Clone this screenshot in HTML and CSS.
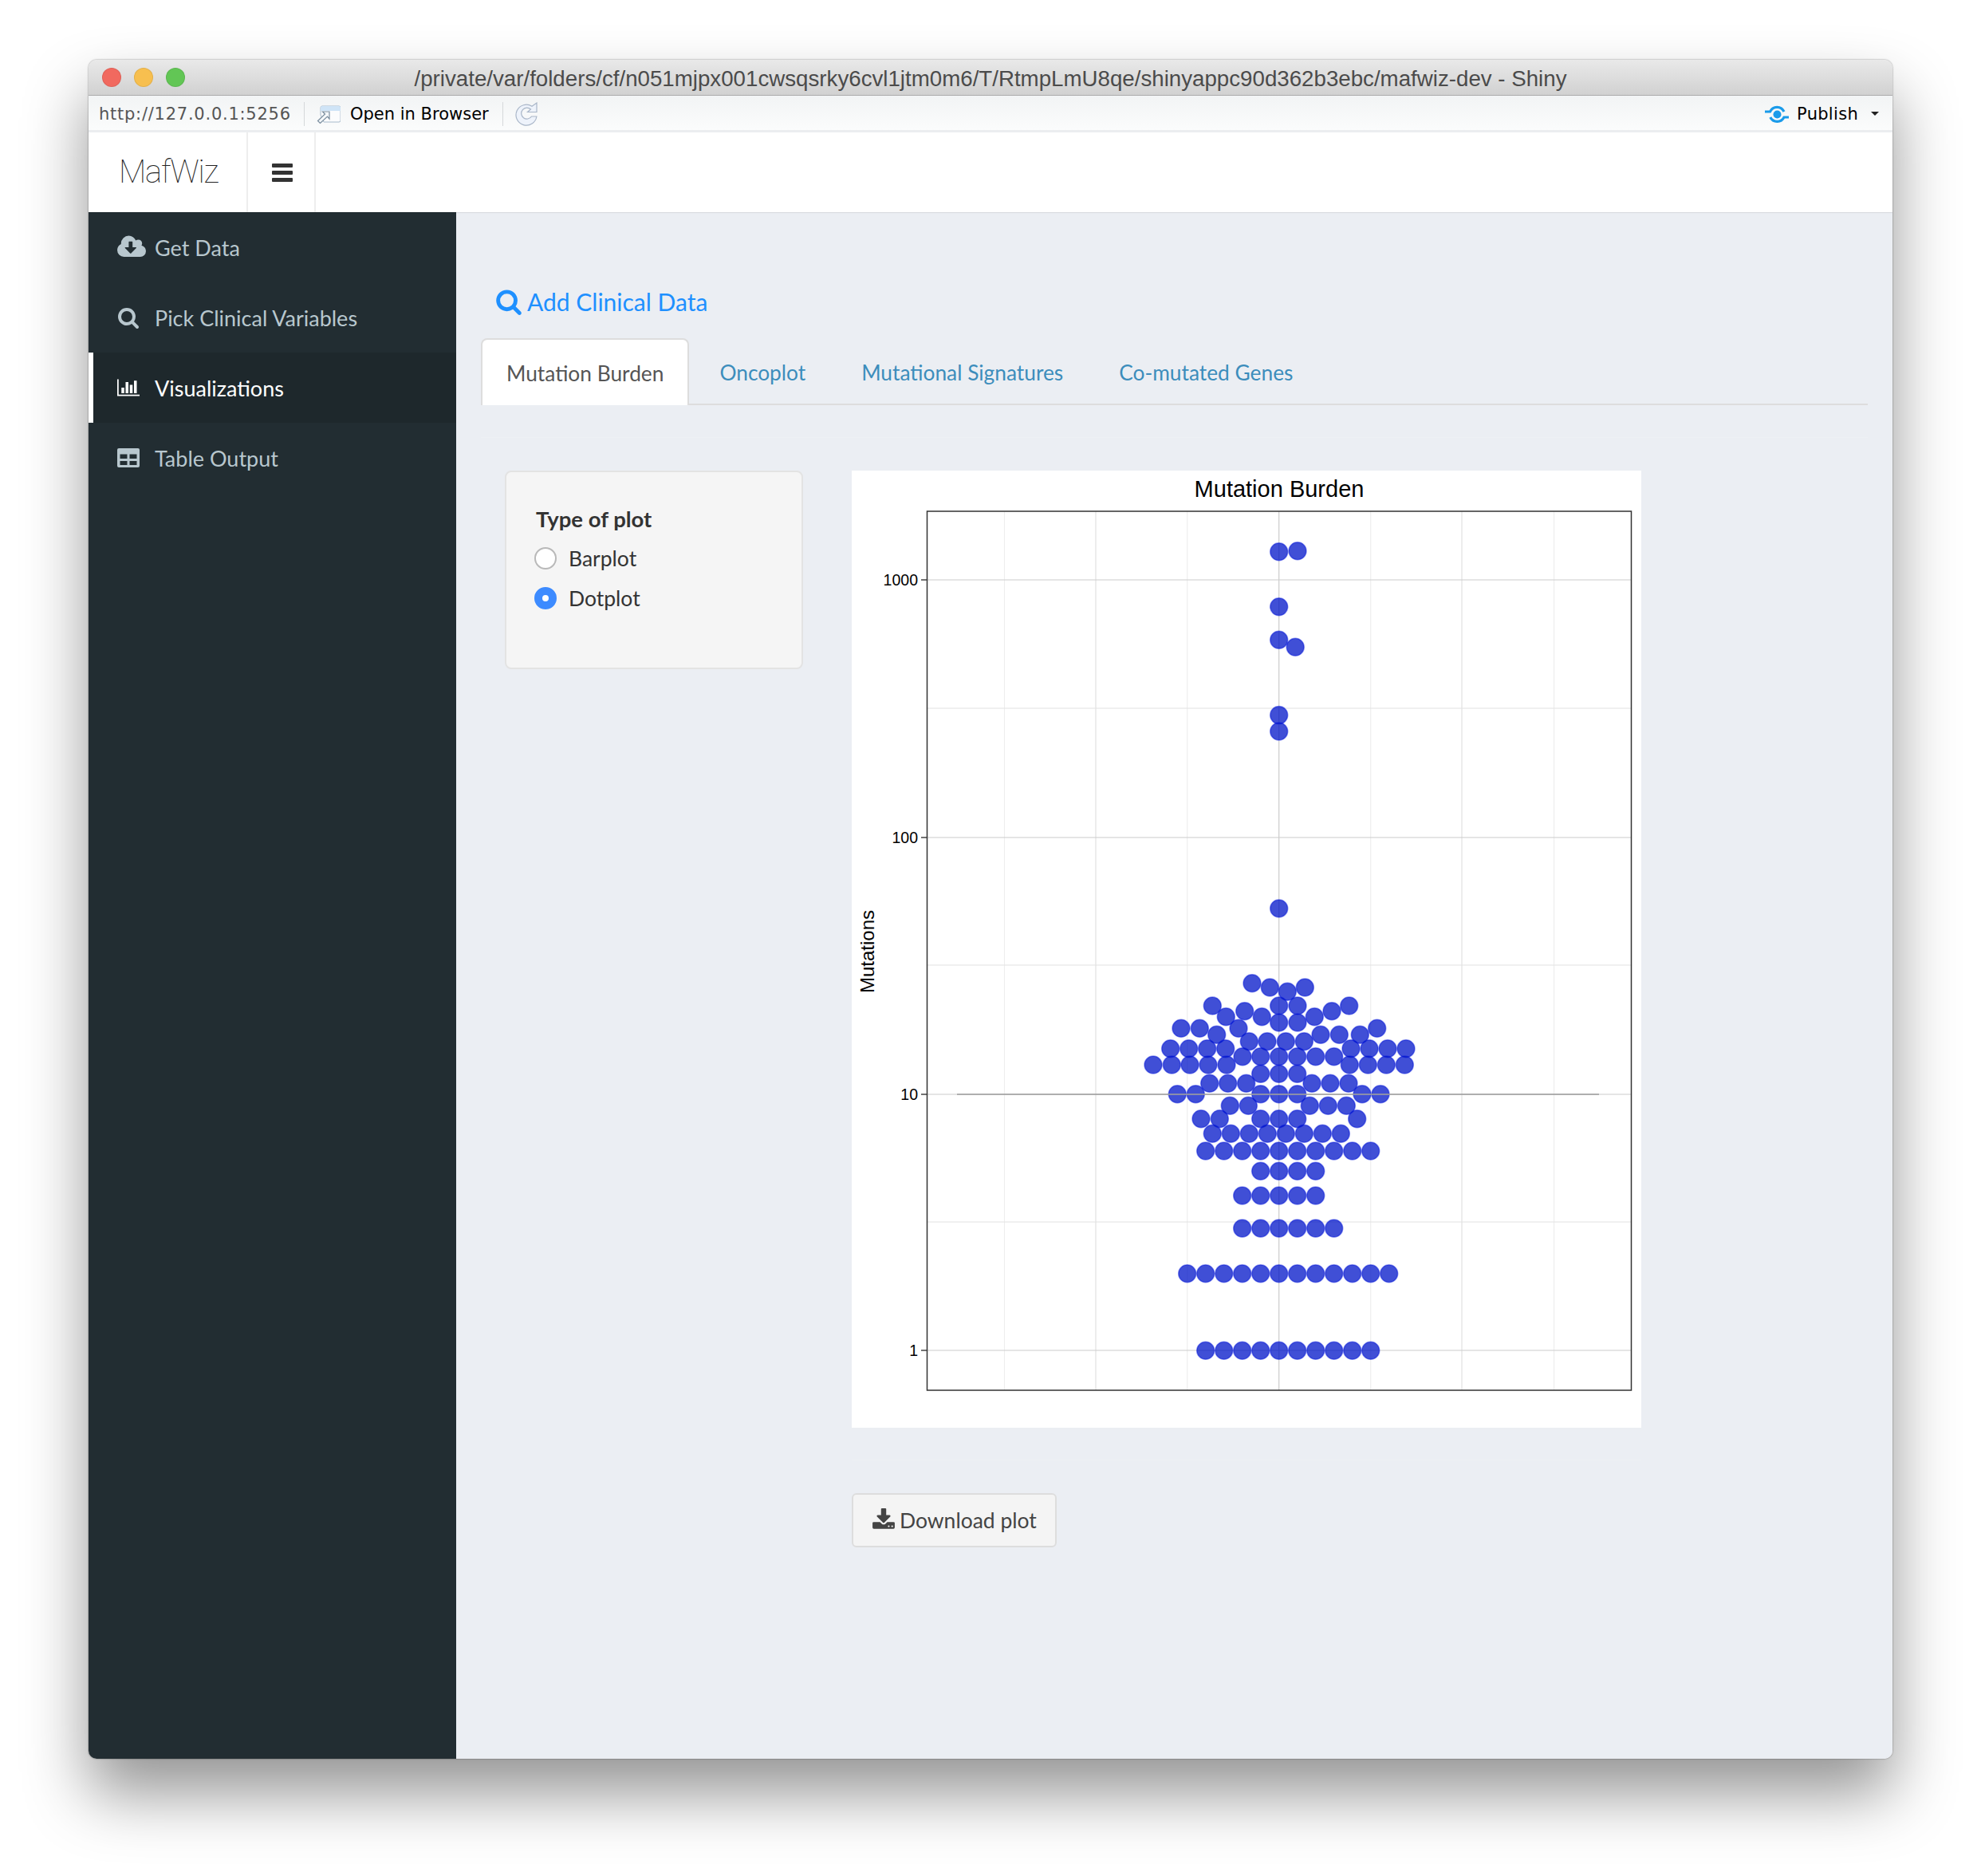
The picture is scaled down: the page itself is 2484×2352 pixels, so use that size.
FILE: index.html
```html
<!DOCTYPE html>
<html lang="en">
<head>
  <meta charset="UTF-8" />
  <title>MafWiz</title>
  <link rel="stylesheet" href="styles.css">
</head>
<body>
  <div class="window">
    <div class="titlebar">
      <span class="light red"></span>
      <span class="light amber"></span>
      <span class="light green"></span>
      <div class="title">/private/var/folders/cf/n051mjpx001cwsqsrky6cvl1jtm0m6/T/RtmpLmU8qe/shinyappc90d362b3ebc/mafwiz-dev - Shiny</div>
    </div>

    <div class="toolbar">
      <span class="url">http://127.0.0.1:5256</span>
      <span class="tool-sep"></span>
      <svg class="open-icon" viewBox="0 0 30 26">
        <path d="M5 14V5a2 2 0 0 1 2-2h21a2 2 0 0 1 2 2v16a2 2 0 0 1-2 2H9z" fill="#fbfcfd" stroke="#a8bacb"/>
        <path d="M5 9V5a2 2 0 0 1 2-2h21a2 2 0 0 1 2 2v4z" fill="#cfe4f7"/>
        <path d="M16 10H7.500l3 3-9 8.500 3 3 9-8.500 2.500 3z" fill="#f4f7f9" stroke="#7a8d9e" stroke-width="1.200"/>
      </svg>
      <span class="open-label">Open in Browser</span>
      <span class="tool-sep"></span>
      <svg class="reload-icon" viewBox="0 0 28 30">
        <path d="M21 5.200 27 1v11.500H15.500l4-3.500A7 7 0 1 0 20.500 18h6.400A13 13 0 1 1 21 5.200z" fill="#eef3fb" stroke="#a9b6c8" stroke-width="1.200"/>
      </svg>
      <div class="publish">
        <svg class="publish-icon" viewBox="0 0 32 24">
          <circle cx="16.500" cy="12.500" r="5" fill="#1a9bea"/>
          <path d="M1 9h6.500A9.600 9.600 0 0 1 25 9M7.800 16A9.600 9.600 0 0 0 25 16h6" fill="none" stroke="#1a9bea" stroke-width="3.200"/>
        </svg>
        <span class="publish-label">Publish</span>
        <span class="caret"></span>
      </div>
    </div>

    <nav class="navbar">
      <div class="logo">MafWiz</div>
      <div class="burger"><span></span><span></span><span></span></div>
    </nav>

    <div class="shell">
      <aside class="sidebar">
        <a class="side-item">
          <span class="side-icon">
            <svg class="icon-cloud" viewBox="0 0 1920 1792"><path d="M1280 928q0-14-9-23t-23-9h-224v-352q0-13-9.500-22.500t-22.500-9.500h-192q-13 0-22.500 9.500t-9.500 22.500v352h-224q-13 0-22.500 9.500t-9.500 22.500q0 14 9 23l352 352q9 9 23 9t23-9l351-351q10-12 10-24zm640 224q0 159-112.500 271.500t-271.500 112.500h-1088q-185 0-316.500-131.500t-131.500-316.500q0-130 70-240t188-165q-2-30-2-43 0-212 150-362t362-150q156 0 285.500 87t188.500 231q71-62 166-62 106 0 181 75t75 181q0 76-41 138 130 31 213.500 135.500t83.500 238.500z"/></svg>
          </span>
          Get Data
        </a>
        <a class="side-item">
          <span class="side-icon">
            <svg class="icon-small" viewBox="0 0 1792 1792"><path d="M1216 832q0-185-131.500-316.500t-316.500-131.500-316.500 131.500-131.500 316.500 131.500 316.500 316.500 131.500 316.500-131.500 131.500-316.500zm512 832q0 52-38 90t-90 38q-54 0-90-38l-343-342q-179 124-399 124-143 0-273.500-55.500t-225-150-150-225-55.500-273.500 55.500-273.500 150-225 225-150 273.500-55.500 273.500 55.500 225 150 150 225 55.500 273.500q0 220-124 399l343 343q37 37 37 90z"/></svg>
          </span>
          Pick Clinical Variables
        </a>
        <a class="side-item active">
          <span class="side-icon">
            <svg class="icon-small" viewBox="0 0 2048 1792"><path d="M640 896v512h-256v-512h256zm384-512v1024h-256v-1024h256zm1024 1152v128h-2048v-1536h128v1408h1920zm-640-896v768h-256v-768h256zm384-384v1152h-256v-1152h256z"/></svg>
          </span>
          Visualizations
        </a>
        <a class="side-item">
          <span class="side-icon">
            <svg class="icon-small" viewBox="0 0 28 24"><path fill-rule="evenodd" d="M2 0h24a2 2 0 0 1 2 2v20a2 2 0 0 1-2 2H2a2 2 0 0 1-2-2V2a2 2 0 0 1 2-2zm1.500 7.500v5.500h9V7.500zm12 0v5.500h9V7.500zm-12 8.500v5h9v-5zm12 0v5h9v-5z"/></svg>
          </span>
          Table Output
        </a>
      </aside>

      <main class="content">
        <a class="clinical-link">
          <svg class="clinical-icon" viewBox="0 0 1792 1792"><path d="M1216 832q0-185-131.500-316.500t-316.500-131.500-316.500 131.500-131.500 316.500 131.500 316.500 316.500 131.500 316.500-131.500 131.500-316.500zm512 832q0 52-38 90t-90 38q-54 0-90-38l-343-342q-179 124-399 124-143 0-273.500-55.500t-225-150-150-225-55.500-273.500 55.500-273.500 150-225 225-150 273.500-55.500 273.500 55.500 225 150 150 225 55.500 273.500q0 220-124 399l343 343q37 37 37 90z"/></svg>
          Add Clinical Data
        </a>

        <ul class="tabs">
          <li class="tab active">Mutation Burden</li>
          <li class="tab">Oncoplot</li>
          <li class="tab">Mutational Signatures</li>
          <li class="tab">Co-mutated Genes</li>
        </ul>

        <hr class="faint">

        <div class="tab-body">
          <div class="well">
            <div class="well-label">Type of plot</div>
            <div class="radio"><span class="radio-dot"></span>Barplot</div>
            <div class="radio"><span class="radio-dot on"></span>Dotplot</div>
          </div>

          <div class="plot-col">
            <svg class="plot" viewBox="0 0 990 1200">
              <g class="grid-minor">
                <path d="M191.500 51V1153M420.700 51V1153M650.700 51V1153M880.600 51V1153"/>
              </g>
              <g class="grid-mid">
                <path d="M95 298H977M95 620H977M95 942H977M306 51V1153M765 51V1153"/>
              </g>
              <g class="grid-major">
                <path d="M95 137H977M95 460H977M95 782H977M95 1103H977M535.700 51V1153"/>
              </g>

              <g class="dots">
                <circle cx="535.700" cy="101.700" r="11"/><circle cx="559" cy="100.700" r="11"/>
                <circle cx="535.700" cy="170.700" r="11"/>
                <circle cx="535.700" cy="212.300" r="11"/><circle cx="556.200" cy="221.300" r="11"/>
                <circle cx="535.700" cy="306.600" r="11"/><circle cx="535.700" cy="327" r="11"/>
                <circle cx="535.700" cy="549" r="11"/>

                <circle cx="502" cy="642.700" r="11"/><circle cx="524.300" cy="648" r="11"/><circle cx="546.300" cy="653.300" r="11"/><circle cx="568.300" cy="648" r="11"/>
                <circle cx="535.700" cy="671" r="11"/><circle cx="559" cy="671" r="11"/><circle cx="452.300" cy="671" r="11"/><circle cx="623.700" cy="671" r="11"/>
                <circle cx="469.300" cy="684.700" r="11"/><circle cx="492.700" cy="677.700" r="11"/><circle cx="514.300" cy="684.700" r="11"/><circle cx="535.700" cy="692" r="11"/><circle cx="559" cy="692" r="11"/><circle cx="580.300" cy="684.700" r="11"/><circle cx="602" cy="677.700" r="11"/>
                <circle cx="413" cy="699.300" r="11"/><circle cx="436.300" cy="699.300" r="11"/><circle cx="457.700" cy="707.300" r="11"/><circle cx="485" cy="699.300" r="11"/><circle cx="658.700" cy="699.300" r="11"/><circle cx="588" cy="707.300" r="11"/><circle cx="611.300" cy="707.300" r="11"/><circle cx="637.300" cy="707.300" r="11"/>
                <circle cx="498.300" cy="715.700" r="11"/><circle cx="521" cy="715.700" r="11"/><circle cx="544.300" cy="715.700" r="11"/><circle cx="567.300" cy="715.700" r="11"/>
                <circle cx="399.700" cy="724.700" r="11"/><circle cx="422.700" cy="724.700" r="11"/><circle cx="445.700" cy="724.700" r="11"/><circle cx="468.700" cy="724.700" r="11"/><circle cx="626" cy="724.700" r="11"/><circle cx="649" cy="724.700" r="11"/><circle cx="672" cy="724.700" r="11"/><circle cx="695" cy="724.700" r="11"/>
                <circle cx="490" cy="734.700" r="11"/><circle cx="512.700" cy="734.700" r="11"/><circle cx="535.700" cy="734.700" r="11"/><circle cx="558.700" cy="734.700" r="11"/><circle cx="581.700" cy="734.700" r="11"/><circle cx="604.700" cy="734.700" r="11"/>
                <circle cx="378" cy="745" r="11"/><circle cx="401.300" cy="745" r="11"/><circle cx="424" cy="745" r="11"/><circle cx="447" cy="745" r="11"/><circle cx="470" cy="745" r="11"/><circle cx="624.300" cy="745" r="11"/><circle cx="647.300" cy="745" r="11"/><circle cx="670.300" cy="745" r="11"/><circle cx="693.300" cy="745" r="11"/>
                <circle cx="512.700" cy="756.300" r="11"/><circle cx="535.700" cy="756.300" r="11"/><circle cx="558.700" cy="756.300" r="11"/>
                <circle cx="448.700" cy="768.300" r="11"/><circle cx="471.700" cy="768.300" r="11"/><circle cx="494.700" cy="768.300" r="11"/><circle cx="577" cy="768.300" r="11"/><circle cx="600" cy="768.300" r="11"/><circle cx="623" cy="768.300" r="11"/>
                <circle cx="408.300" cy="781.700" r="11"/><circle cx="431.300" cy="781.700" r="11"/><circle cx="512.700" cy="781.700" r="11"/><circle cx="535.700" cy="781.700" r="11"/><circle cx="558.700" cy="781.700" r="11"/><circle cx="640" cy="781.700" r="11"/><circle cx="663" cy="781.700" r="11"/>
                <circle cx="474.300" cy="796.300" r="11"/><circle cx="497.300" cy="796.300" r="11"/><circle cx="574.300" cy="796.300" r="11"/><circle cx="597.300" cy="796.300" r="11"/><circle cx="620.300" cy="796.300" r="11"/>
                <circle cx="438" cy="812.700" r="11"/><circle cx="461.300" cy="812.700" r="11"/><circle cx="512.700" cy="812.700" r="11"/><circle cx="535.700" cy="812.700" r="11"/><circle cx="558.700" cy="812.700" r="11"/><circle cx="633.700" cy="812.700" r="11"/>
                <circle cx="452.300" cy="831.300" r="11"/><circle cx="475.300" cy="831.300" r="11"/><circle cx="498.300" cy="831.300" r="11"/><circle cx="521.300" cy="831.300" r="11"/><circle cx="544.300" cy="831.300" r="11"/><circle cx="567.300" cy="831.300" r="11"/><circle cx="590.300" cy="831.300" r="11"/><circle cx="613.300" cy="831.300" r="11"/>
                <circle cx="443.700" cy="853" r="11"/><circle cx="466.700" cy="853" r="11"/><circle cx="489.700" cy="853" r="11"/><circle cx="512.700" cy="853" r="11"/><circle cx="535.700" cy="853" r="11"/><circle cx="558.700" cy="853" r="11"/><circle cx="581.700" cy="853" r="11"/><circle cx="604.700" cy="853" r="11"/><circle cx="627.700" cy="853" r="11"/><circle cx="650.700" cy="853" r="11"/>
                <circle cx="512.700" cy="878.300" r="11"/><circle cx="535.700" cy="878.300" r="11"/><circle cx="558.700" cy="878.300" r="11"/><circle cx="581.700" cy="878.300" r="11"/>
                <circle cx="489.700" cy="909" r="11"/><circle cx="512.700" cy="909" r="11"/><circle cx="535.700" cy="909" r="11"/><circle cx="558.700" cy="909" r="11"/><circle cx="581.700" cy="909" r="11"/>
                <circle cx="489.700" cy="950" r="11"/><circle cx="512.700" cy="950" r="11"/><circle cx="535.700" cy="950" r="11"/><circle cx="558.700" cy="950" r="11"/><circle cx="581.700" cy="950" r="11"/><circle cx="604.700" cy="950" r="11"/>
                <circle cx="420.700" cy="1006.700" r="11"/><circle cx="443.700" cy="1006.700" r="11"/><circle cx="466.700" cy="1006.700" r="11"/><circle cx="489.700" cy="1006.700" r="11"/><circle cx="512.700" cy="1006.700" r="11"/><circle cx="535.700" cy="1006.700" r="11"/><circle cx="558.700" cy="1006.700" r="11"/><circle cx="581.700" cy="1006.700" r="11"/><circle cx="604.700" cy="1006.700" r="11"/><circle cx="627.700" cy="1006.700" r="11"/><circle cx="650.700" cy="1006.700" r="11"/><circle cx="673.700" cy="1006.700" r="11"/>
                <circle cx="443.700" cy="1103.300" r="11"/><circle cx="466.700" cy="1103.300" r="11"/><circle cx="489.700" cy="1103.300" r="11"/><circle cx="512.700" cy="1103.300" r="11"/><circle cx="535.700" cy="1103.300" r="11"/><circle cx="558.700" cy="1103.300" r="11"/><circle cx="581.700" cy="1103.300" r="11"/><circle cx="604.700" cy="1103.300" r="11"/><circle cx="627.700" cy="1103.300" r="11"/><circle cx="650.700" cy="1103.300" r="11"/>
              </g>

              <path class="ref-line" d="M132 782H937"/>
              <rect class="panel" x="94.500" y="51" width="883" height="1102"/>
              <path class="ticks" d="M87 137H94M87 460H94M87 782H94M87 1103H94"/>

              <text class="plot-title" x="536" y="33">Mutation Burden</text>
              <text class="tick-label" x="83" y="143.500">1000</text>
              <text class="tick-label" x="83" y="466.500">100</text>
              <text class="tick-label" x="83" y="788.500">10</text>
              <text class="tick-label" x="83" y="1109.500">1</text>
              <text class="axis-label" transform="translate(28 603) rotate(-90)">Mutations</text>
            </svg>

            <hr class="faint">

            <button class="download">
              <svg class="download-icon" viewBox="0 0 1792 1792"><path d="M1344 1344q0-26-19-45t-45-19-45 19-19 45 19 45 45 19 45-19 19-45zm256 0q0-26-19-45t-45-19-45 19-19 45 19 45 45 19 45-19 19-45zm128-224v320q0 40-28 68t-68 28h-1472q-40 0-68-28t-28-68v-320q0-40 28-68t68-28h465l135 136q58 56 136 56t136-56l136-136h464q40 0 68 28t28 68zm-325-569q17 41-14 70l-448 448q-18 19-45 19t-45-19l-448-448q-31-29-14-70 17-39 59-39h256v-448q0-26 19-45t45-19h256q26 0 45 19t19 45v448h256q42 0 59 39z"/></svg>
              Download plot
            </button>
          </div>
        </div>
      </main>
    </div>
  </div>
</body>
</html>
```

FILE: styles.css
```css
html, body {
  margin: 0;
  height: 100%;
}

body {
  background: #ffffff;
  font-family: 'Lato', 'Open Sans', sans-serif;
  font-size: 27px;
  color: #333333;
}

.window {
  position: relative;
  box-sizing: border-box;
  width: 2262px;
  height: 2130px;
  margin: 75px 0 0 111px;
  display: flex;
  flex-direction: column;
  border-radius: 10px;
  box-shadow: 0 44px 80px rgba(0,0,0,0.42), 0 0 2px rgba(0,0,0,0.5);
  overflow: hidden;
}

/* title bar */
.titlebar {
  position: relative;
  flex: none;
  height: 44px;
  display: flex;
  align-items: center;
  gap: 16px;
  padding-left: 17px;
  background: linear-gradient(to bottom, #e9e9e9, #d1d1d1);
  border-bottom: 1px solid #ababab;
}

.light {
  width: 24px;
  height: 24px;
  border-radius: 50%;
  box-sizing: border-box;
  border: 1px solid rgba(0,0,0,0.08);
}
.red { background: #f1695f; }
.amber { background: #f7bf4f; }
.green { background: #62c655; }

.title {
  position: absolute;
  left: 0;
  right: 0;
  top: 8px;
  text-align: center;
  font-family: 'Liberation Sans', sans-serif;
  font-size: 27.700px;
  color: #4b4b4b;
}

/* rstudio toolbar */
.toolbar {
  flex: none;
  height: 41px;
  padding: 2px 0 0 13px;
  display: flex;
  align-items: center;
  background: linear-gradient(to bottom, #f2f4f5, #fbfcfc);
  border-bottom: 3px solid #ebedf0;
  font-family: 'DejaVu Sans', sans-serif;
  font-size: 21px;
}

.url {
  color: #555555;
  width: 257px;
  letter-spacing: 0.750px;
}

.tool-sep {
  width: 1px;
  height: 30px;
  background: #d5d8da;
}

.open-icon {
  width: 30px;
  height: 26px;
  margin: 0 12px 0 15px;
}

.open-label {
  color: #000000;
  width: 191px;
}

.reload-icon {
  width: 28px;
  height: 30px;
  margin-left: 15px;
}

.publish {
  margin-left: auto;
  padding-right: 17px;
  display: flex;
  align-items: center;
  color: #000000;
}

.publish-label {
  letter-spacing: 0.300px;
}

.publish-icon {
  width: 32px;
  height: 24px;
  margin-right: 9px;
}

.caret {
  width: 0;
  height: 0;
  margin-left: 16px;
  border-left: 5px solid transparent;
  border-right: 5px solid transparent;
  border-top: 5px solid #222222;
}

/* app header */
.navbar {
  flex: none;
  height: 100px;
  display: flex;
  background: #ffffff;
  box-shadow: 0 1px 1px rgba(0,0,0,0.08);
  position: relative;
}

.logo {
  box-sizing: border-box;
  width: 200px;
  padding-left: 38px;
  line-height: 100px;
  font-family: 'Roboto', sans-serif;
  font-weight: 100;
  font-size: 40px;
  letter-spacing: -1.200px;
  color: #222222;
  border-right: 2px solid #eeeeee;
}

.burger {
  box-sizing: border-box;
  width: 85px;
  padding-left: 2px;
  display: flex;
  flex-direction: column;
  justify-content: center;
  align-items: center;
  gap: 4px;
  border-right: 2px solid #eeeeee;
}

.burger span {
  width: 26px;
  height: 5px;
  border-radius: 1px;
  background: #333333;
}

/* page */
.shell {
  flex: 1;
  display: flex;
  min-height: 0;
}

.sidebar {
  flex: none;
  width: 461px;
  background: #222d32;
}

.side-item {
  box-sizing: border-box;
  height: 88px;
  display: flex;
  align-items: center;
  padding-left: 36px;
  color: #b8c7ce;
}

.side-item.active {
  padding-left: 30px;
  border-left: 6px solid #ffffff;
  background: #1e282c;
  color: #ffffff;
}

.side-icon {
  width: 47px;
  display: flex;
  align-items: center;
}

.side-icon svg {
  fill: #b8c7ce;
}
.side-item.active .side-icon svg {
  fill: #ffffff;
}

.icon-cloud {
  width: 36px;
  height: 34px;
}

.icon-small {
  width: 28px;
  height: 28px;
}

.content {
  flex: 1;
  padding: 88px 31px 0 31px;
  background: #ebeef3;
}

.clinical-link {
  display: flex;
  align-items: center;
  height: 48px;
  padding-left: 18px;
  font-size: 30px;
  color: #1e90ff;
}

.clinical-icon {
  width: 34px;
  height: 34px;
  margin-right: 6px;
  fill: #1e90ff;
}

.tabs {
  list-style: none;
  margin: 22px 0 0 0;
  padding: 0;
  height: 84px;
  display: flex;
  box-sizing: border-box;
  border-bottom: 2px solid #dddddd;
}

.tab {
  box-sizing: border-box;
  height: 84px;
  padding: 0 32px;
  margin-right: 6px;
  font-size: 26.300px;
  line-height: 86px;
  color: #3c8dbc;
}

.tab.active {
  padding: 0 30px;
  color: #555555;
  background: #ffffff;
  border: 2px solid #dddddd;
  border-bottom: none;
  line-height: 84px;
  border-radius: 8px 8px 0 0;
}

.tab-body {
  display: flex;
  align-items: flex-start;
  padding-left: 30px;
  gap: 61px;
}

.well {
  box-sizing: border-box;
  width: 374px;
  height: 249px;
  padding: 40px 37px;
  background: #f5f5f5;
  border: 2px solid #e3e3e3;
  border-radius: 8px;
}

.well-label {
  font-weight: 700;
  font-size: 27.500px;
  line-height: 38px;
  margin-bottom: 5px;
}

.radio {
  height: 50px;
  display: flex;
  align-items: center;
  margin-left: -2px;
  font-size: 26.500px;
}

.radio-dot {
  box-sizing: border-box;
  width: 28px;
  height: 28px;
  margin-right: 15px;
  border-radius: 50%;
  background: #ffffff;
  border: 2px solid #b9b9b9;
}

.radio-dot.on {
  border: 10px solid #3d8bff;
}

.plot-col {
  width: 990px;
}

.plot {
  display: block;
  width: 990px;
  height: 1200px;
  background: #ffffff;
}

.grid-minor path { stroke: #eeeeee; stroke-width: 1.200; fill: none; }
.grid-mid path { stroke: #e2e2e2; stroke-width: 1.200; fill: none; }
.grid-major path { stroke: #cccccc; stroke-width: 1.200; fill: none; }

.dots circle {
  fill: rgba(0,20,200,0.75);
  stroke: rgba(0,20,220,0.450);
  stroke-width: 1.500;
}

.ref-line {
  stroke: rgba(160,160,160,0.800);
  stroke-width: 2;
  fill: none;
}

.panel {
  fill: none;
  stroke: #333333;
  stroke-width: 1.500;
}

.ticks {
  stroke: #444444;
  stroke-width: 1.500;
  fill: none;
}

.plot text {
  font-family: 'Liberation Sans', sans-serif;
  fill: #000000;
}

.plot-title {
  font-size: 29px;
  text-anchor: middle;
}

.tick-label {
  font-size: 19.500px;
  text-anchor: end;
}

.axis-label {
  font-size: 24px;
  text-anchor: middle;
}

.faint {
  margin: 40px 0 41px 0;
  height: 1px;
  border: none;
  background: #eef0f4;
}

.download {
  box-sizing: border-box;
  width: 257px;
  height: 68px;
  display: flex;
  align-items: center;
  padding: 0 0 0 23px;
  font-family: inherit;
  font-size: 26.500px;
  color: #444444;
  background: #f4f4f4;
  border: 2px solid #dddddd;
  border-radius: 6px;
}

.download-icon {
  width: 30px;
  height: 30px;
  margin-right: 5px;
  fill: #444444;
}
```
